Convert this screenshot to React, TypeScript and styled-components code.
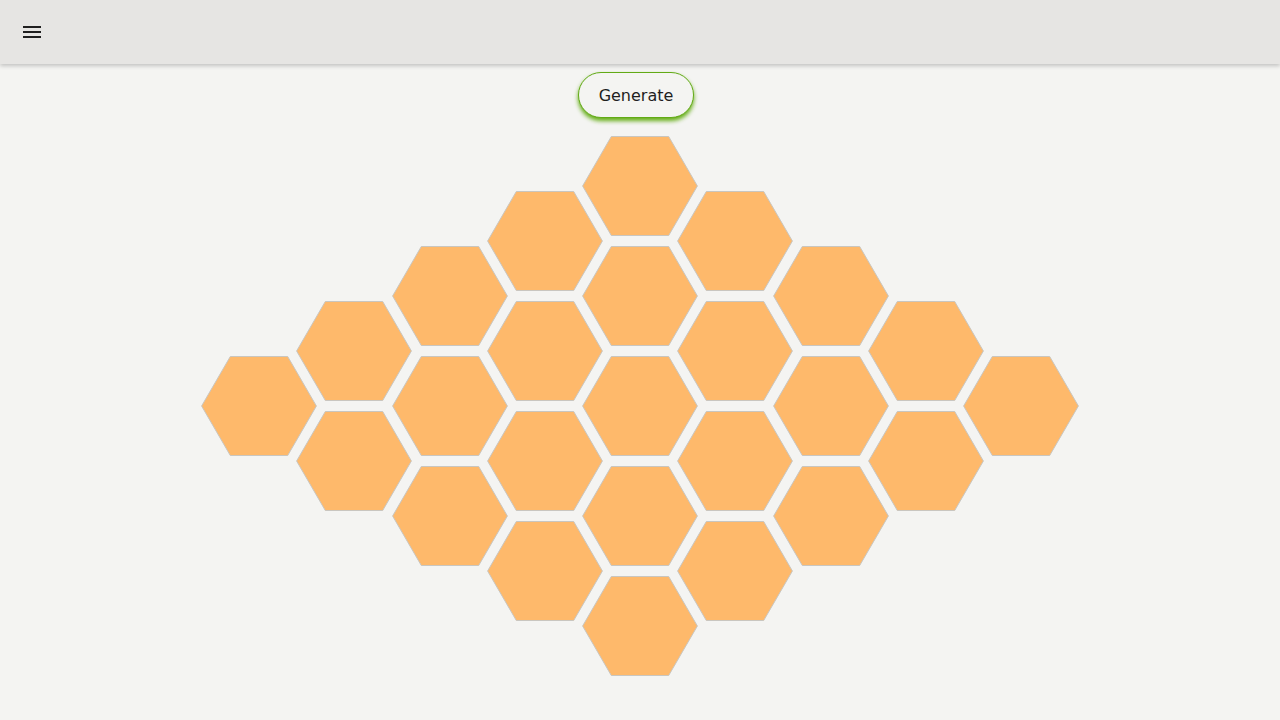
import styled, { createGlobalStyle } from "styled-components";

const GlobalStyle = createGlobalStyle`
    html, body {
        margin: 0;
        padding: 0;
        background-color: #f4f4f2;
        font-family: "DejaVu Sans", "Liberation Sans", sans-serif;
    }
`;

const Page = styled.div`
    min-height: 100vh;
    display: flex;
    flex-direction: column;
`;

const Header = styled.header`
    height: 64px;
    background-color: #e6e5e3;
    box-shadow: 0 2px 4px rgba(0, 0, 0, 0.2);
    display: flex;
    align-items: center;
    padding: 0 20px;
    position: relative;
    z-index: 1;
`;

const MenuButton = styled.button`
    width: 24px;
    height: 24px;
    padding: 0;
    border: none;
    background: none;
    display: flex;
    cursor: pointer;
    color: #1f1f1f;
`;

const Main = styled.main`
    display: flex;
    flex-direction: column;
    align-items: center;
    padding-top: 8px;
`;

const GenerateButton = styled.button`
    width: 116px;
    height: 46px;
    margin-right: 8px;
    border-radius: 23px;
    border: 1px solid #62aa16;
    background-color: #f4f4f2;
    box-shadow: 0 3px 4px rgba(92, 170, 8, 0.95);
    font-family: "DejaVu Sans", "Liberation Sans", sans-serif;
    font-size: 16px;
    color: #1e1e1e;
    cursor: pointer;
`;

const Board = styled.div`
    display: flex;
    align-items: center;
    margin-top: 18px;
`;

const Column = styled.div<{ first: boolean }>`
    display: flex;
    flex-direction: column;
    gap: 10px;
    margin-left: ${(props) => (props.first ? "0" : "-20.75px")};
`;

const Hex = styled.svg`
    display: block;
    width: 116px;
    height: 100px;
`;

const columnSizes = [1, 2, 3, 4, 5, 4, 3, 2, 1];

function HexTile() {
    return (
        <Hex viewBox="0 0 116 100">
            <polygon
                points="29.3,0.5 86.7,0.5 115.4,50 86.7,99.5 29.3,99.5 0.6,50"
                fill="#feb96b"
                stroke="#c9c6c0"
                strokeWidth="1"
            />
        </Hex>
    );
}

function App() {
    return (
        <Page>
            <GlobalStyle />
            <Header>
                <MenuButton aria-label="menu">
                    <svg width="24" height="24" viewBox="0 0 24 24">
                        <path
                            d="M3 18h18v-2H3v2zm0-5h18v-2H3v2zm0-7v2h18V6H3z"
                            fill="currentColor"
                        />
                    </svg>
                </MenuButton>
            </Header>
            <Main>
                <GenerateButton>Generate</GenerateButton>
                <Board>
                    {columnSizes.map((count, col) => (
                        <Column key={col} first={col === 0}>
                            {Array.from({ length: count }).map((_, i) => (
                                <HexTile key={i} />
                            ))}
                        </Column>
                    ))}
                </Board>
            </Main>
        </Page>
    );
}

export default App;
